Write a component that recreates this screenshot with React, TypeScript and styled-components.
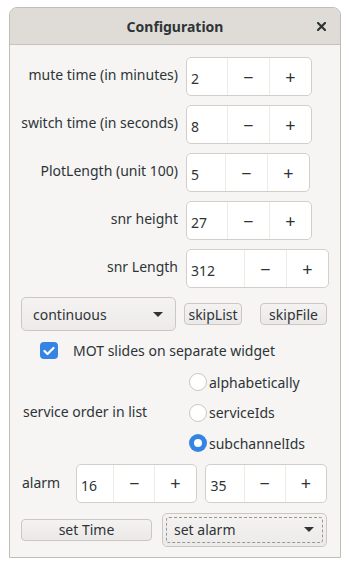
import styled, { createGlobalStyle } from "styled-components"

const GlobalStyle = createGlobalStyle`
  html, body {
    margin: 0;
    padding: 0;
    background: #ffffff;
  }
  body {
    font-family: "Noto Sans", "DejaVu Sans", sans-serif;
    font-size: 14px;
    color: #2e3436;
  }
`

const Window = styled.div`
  margin: 7px 0 0 9px;
  width: 332px;
  box-sizing: border-box;
  border: 1px solid #c0bcb7;
  border-radius: 8px 8px 0 0;
  background: #f6f5f4;
  overflow: hidden;
`

const TitleBar = styled.div`
  height: 36px;
  display: grid;
  grid-template-columns: 1fr auto 1fr;
  align-items: center;
  background: #dfdcd8;
  border-bottom: 1px solid #c6c2bd;
`

const Title = styled.div`
  grid-column: 2;
  font-weight: bold;
  font-size: 14px;
  color: #2e3436;
`

const CloseButton = styled.div`
  justify-self: end;
  margin-right: 14px;
  width: 10px;
  height: 10px;
  display: flex;
  align-items: center;
  justify-content: center;
`

const Body = styled.div`
  padding: 12px 13px 10px 11px;
  display: flex;
  flex-direction: column;
`

const FieldRow = styled.div<{ $mt?: number }>`
  display: grid;
  grid-template-columns: 157px auto;
  column-gap: 8px;
  align-items: center;
  height: 39px;
  margin-top: ${(p) => p.$mt ?? 0}px;
`

const Label = styled.div`
  text-align: right;
  white-space: nowrap;
  padding-bottom: 5px;
`

const SpinHolder = styled.div`
  display: flex;
`

const Spin = styled.div`
  display: flex;
  height: 39px;
  box-sizing: border-box;
  border: 1px solid #d3cec9;
  border-radius: 5px;
  background: #ffffff;
  overflow: hidden;
`

const SpinValue = styled.div<{ $w: number }>`
  width: ${(p) => p.$w}px;
  padding: 4px 0 0 4px;
  display: flex;
  align-items: center;
  box-sizing: border-box;
  border-right: 1px solid #eeeae6;
`

const SpinButton = styled.div`
  width: 41px;
  display: flex;
  align-items: center;
  justify-content: center;
  font-size: 18px;
  color: #2e3436;
  & + & {
    border-left: 1px solid #eeeae6;
  }
`

const ControlRow = styled.div<{ $mt: number; $h: number }>`
  display: flex;
  align-items: center;
  height: ${(p) => p.$h}px;
  margin-top: ${(p) => p.$mt}px;
`

const Combo = styled.div<{ $w: number; $focus?: boolean }>`
  position: relative;
  width: ${(p) => p.$w}px;
  height: 34px;
  box-sizing: border-box;
  border: 1px solid #cdc7c2;
  border-radius: 5px;
  background: linear-gradient(#f4f3f2, #edebe9);
  display: flex;
  align-items: center;
  justify-content: space-between;
  padding: 0 12px 0 11px;
  &::after {
    content: "";
    display: ${(p) => (p.$focus ? "block" : "none")};
    position: absolute;
    inset: 3px;
    border: 1px dashed #9a9692;
    border-radius: 3px;
  }
`

const Arrow = styled.div`
  width: 0;
  height: 0;
  border-left: 5px solid transparent;
  border-right: 5px solid transparent;
  border-top: 5px solid #2e3436;
`

const Button = styled.div<{ $w: number; $ml: number }>`
  width: ${(p) => p.$w}px;
  margin-left: ${(p) => p.$ml}px;
  height: 22px;
  box-sizing: border-box;
  border: 1px solid #cdc7c2;
  border-radius: 4px;
  background: linear-gradient(#f4f3f2, #ebe9e7);
  display: flex;
  align-items: center;
  justify-content: center;
  white-space: nowrap;
`

const CheckRow = styled.div`
  display: flex;
  align-items: center;
  height: 17px;
  margin-top: 11px;
  padding-left: 19px;
  gap: 15px;
`

const CheckBox = styled.div`
  width: 18px;
  height: 17px;
  border-radius: 4px;
  background: #3584e4;
  display: flex;
  align-items: center;
  justify-content: center;
`

const OrderGroup = styled.div`
  display: grid;
  grid-template-columns: 166px auto;
  margin-top: 8px;
  padding-left: 2px;
`

const OrderLabel = styled.div`
  align-self: center;
  padding-bottom: 3px;
`

const RadioList = styled.div`
  display: flex;
  flex-direction: column;
`

const RadioRow = styled.div`
  height: 30.5px;
  display: flex;
  align-items: center;
  gap: 2px;
`

const Radio = styled.div<{ $on?: boolean }>`
  width: 18px;
  height: 18px;
  box-sizing: border-box;
  border-radius: 50%;
  border: ${(p) => (p.$on ? "none" : "1px solid #cdc7c2")};
  background: ${(p) => (p.$on ? "#3584e4" : "#ffffff")};
  display: flex;
  align-items: center;
  justify-content: center;
  &::after {
    content: "";
    display: ${(p) => (p.$on ? "block" : "none")};
    width: 8px;
    height: 8px;
    border-radius: 50%;
    background: #ffffff;
  }
`

const AlarmLabel = styled.div`
  width: 55px;
  padding-left: 1px;
  padding-bottom: 2px;
`

const Gap = styled.div<{ $w: number }>`
  width: ${(p) => p.$w}px;
`

function SpinBox({ value, valueWidth }: { value: string; valueWidth: number }) {
  return (
    <Spin>
      <SpinValue $w={valueWidth}>{value}</SpinValue>
      <SpinButton>−</SpinButton>
      <SpinButton>+</SpinButton>
    </Spin>
  )
}

const fields = [
  { label: "mute time (in minutes)", value: "2", w: 41 },
  { label: "switch time (in seconds)", value: "8", w: 41 },
  { label: "PlotLength (unit 100)", value: "5", w: 39 },
  { label: "snr height", value: "27", w: 41 },
  { label: "snr Length", value: "312", w: 58 },
]

export default function App() {
  return (
    <>
      <GlobalStyle />
      <Window>
        <TitleBar>
          <Title>Configuration</Title>
          <CloseButton>
            <svg width="9" height="9" viewBox="0 0 9 9">
              <path d="M1 1 L8 8 M8 1 L1 8" stroke="#2e3436" strokeWidth="2.2" strokeLinecap="square" />
            </svg>
          </CloseButton>
        </TitleBar>
        <Body>
          {fields.map((f, i) => (
            <FieldRow key={f.label} $mt={i === 0 ? 0 : 9}>
              <Label>{f.label}</Label>
              <SpinHolder>
                <SpinBox value={f.value} valueWidth={f.w} />
              </SpinHolder>
            </FieldRow>
          ))}
          <ControlRow $mt={9} $h={34}>
            <Combo $w={155}>
              <span>continuous</span>
              <Arrow />
            </Combo>
            <Button $w={58} $ml={8}>skipList</Button>
            <Button $w={67} $ml={18}>skipFile</Button>
          </ControlRow>
          <CheckRow>
            <CheckBox>
              <svg width="12" height="10" viewBox="0 0 12 10">
                <path d="M1.5 5 L4.5 8 L10.5 2" stroke="#ffffff" strokeWidth="2.2" fill="none" strokeLinecap="round" strokeLinejoin="round" />
              </svg>
            </CheckBox>
            <span>MOT slides on separate widget</span>
          </CheckRow>
          <OrderGroup>
            <OrderLabel>service order in list</OrderLabel>
            <RadioList>
              <RadioRow>
                <Radio />
                <span>alphabetically</span>
              </RadioRow>
              <RadioRow>
                <Radio />
                <span>serviceIds</span>
              </RadioRow>
              <RadioRow>
                <Radio $on />
                <span>subchannelIds</span>
              </RadioRow>
            </RadioList>
          </OrderGroup>
          <ControlRow $mt={5} $h={39}>
            <AlarmLabel>alarm</AlarmLabel>
            <SpinBox value="16" valueWidth={38} />
            <Gap $w={9} />
            <SpinBox value="35" valueWidth={39} />
          </ControlRow>
          <ControlRow $mt={10} $h={34}>
            <Button $w={131} $ml={0}>set Time</Button>
            <Gap $w={10} />
            <Combo $w={165} $focus>
              <span>set alarm</span>
              <Arrow />
            </Combo>
          </ControlRow>
        </Body>
      </Window>
    </>
  )
}
